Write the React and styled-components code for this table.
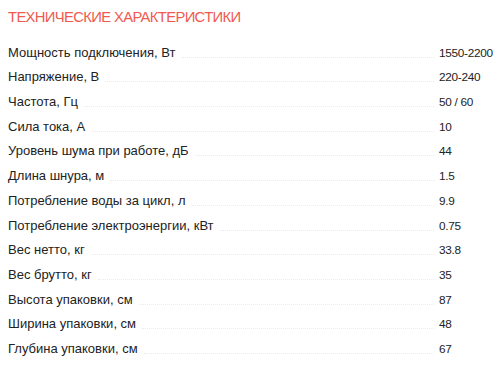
import React from 'react'
import styled, { createGlobalStyle } from 'styled-components'

const Global = createGlobalStyle`
  body {
    margin: 0;
    background: #fff;
    font-family: 'Liberation Sans', Arial, sans-serif;
  }
`

const Page = styled.div`
  padding: 8px 8px 0 8px;
`

const Title = styled.h2`
  margin: 0 0 10px;
  font-size: 14.8px;
  font-weight: 400;
  line-height: 18px;
  letter-spacing: -0.65px;
  color: #ef5a4f;
  text-transform: uppercase;
`

const List = styled.div`
  display: flex;
  flex-direction: column;
`

const Row = styled.div`
  display: flex;
  align-items: flex-end;
  height: 24.7px;
  font-size: 13px;
  color: #222;
`

const Label = styled.span`
  white-space: nowrap;
  line-height: 16px;
`

const Dots = styled.span`
  flex: 1;
  margin: 0 5px 3px 6px;
  border-bottom: 1px dotted #ebebeb;
`

const Value = styled.span`
  width: 52px;
  white-space: nowrap;
  font-size: 11.8px;
  letter-spacing: -0.3px;
  line-height: 16px;
`

const specs = [
  ['Мощность подключения, Вт', '1550-2200'],
  ['Напряжение, В', '220-240'],
  ['Частота, Гц', '50 / 60'],
  ['Сила тока, А', '10'],
  ['Уровень шума при работе, дБ', '44'],
  ['Длина шнура, м', '1.5'],
  ['Потребление воды за цикл, л', '9.9'],
  ['Потребление электроэнергии, кВт', '0.75'],
  ['Вес нетто, кг', '33.8'],
  ['Вес брутто, кг', '35'],
  ['Высота упаковки, см', '87'],
  ['Ширина упаковки, см', '48'],
  ['Глубина упаковки, см', '67'],
]

const App = () => (
  <Page>
    <Global />
    <Title>Технические характеристики</Title>
    <List>
      {specs.map(([label, value]) => (
        <Row key={label}>
          <Label>{label}</Label>
          <Dots />
          <Value>{value}</Value>
        </Row>
      ))}
    </List>
  </Page>
)

export default App
